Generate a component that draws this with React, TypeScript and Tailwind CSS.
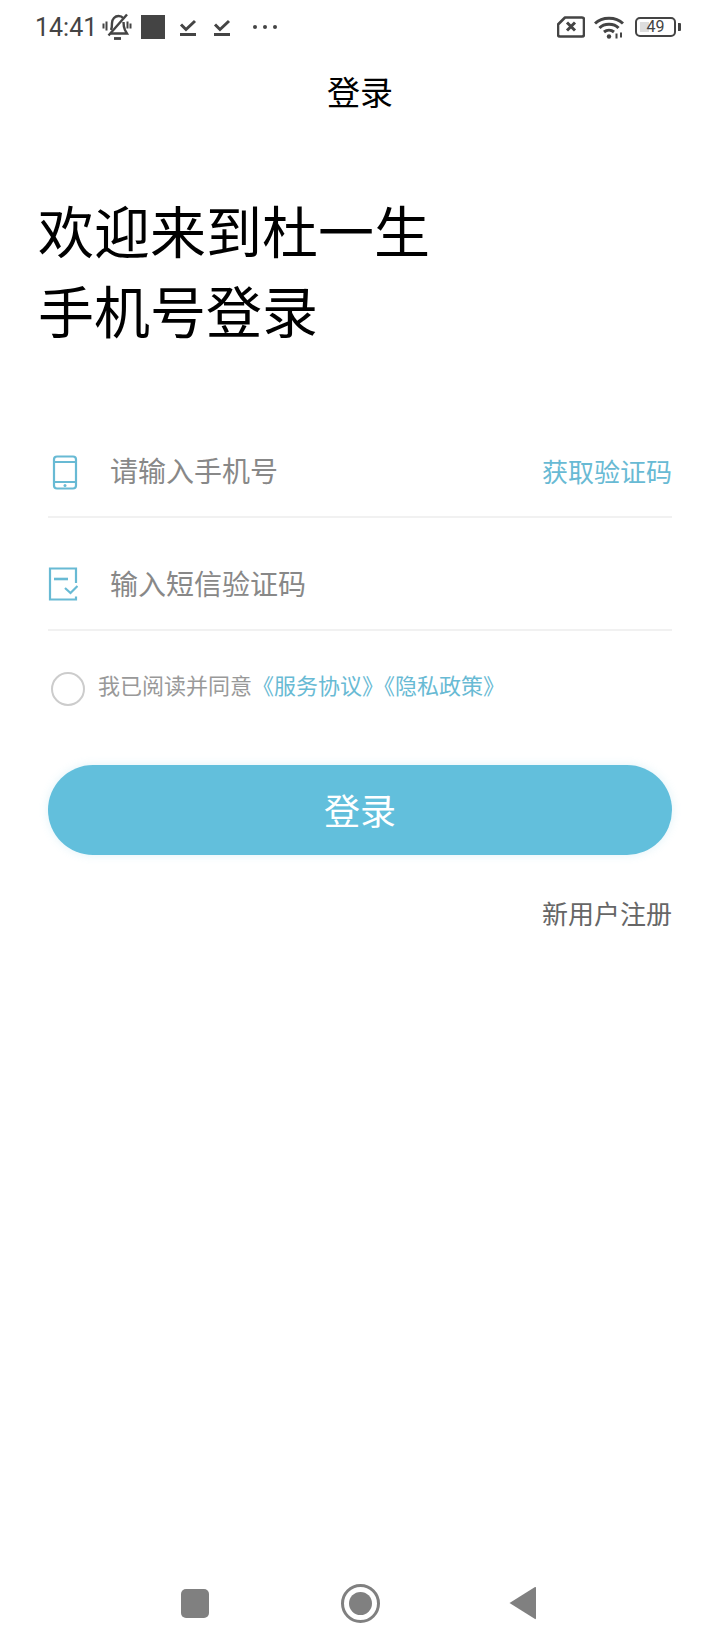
import React from "react";

const font = { fontFamily: '"Noto Sans CJK SC", "Noto Sans", sans-serif' };

function Tick({ className }: { className: string }) {
  return (
    <svg width="18" height="20" viewBox="0 0 18 20" className={className} fill="none" stroke="#444">
      <path d="M2 7.500l5 5 9-8.500" strokeWidth="3" />
      <path d="M1 17.500h16" strokeWidth="3" />
    </svg>
  );
}

function StatusBar() {
  return (
    <div className="flex h-[54px] items-center justify-between pl-[35px] pr-[39px] text-[#444]">
      <div className="flex items-center">
        <span className="text-[25px] leading-none [font-family:Roboto,sans-serif]">14:41</span>
        <svg width="30" height="28" viewBox="0 0 30 28" className="ml-[5px]" fill="none" stroke="#444" strokeWidth="2.400">
          <path d="M9 17c1-2 1-4 1-7 0-4 3-7 6.500-7 2 0 3.500.5 4.500 2M21.500 9c0 4 .5 6 1.500 8l2 3.500H8.500" />
          <path d="M6.500 22.500 25 1.500" />
          <path d="M12 25.500h7" strokeWidth="2.800" />
          <path d="M1.500 10.500v5M4.500 8.500v9M25.500 8.500v7M28.500 10.500v5" strokeWidth="2" />
        </svg>
        <div className="ml-[9px] h-[24px] w-[24px] bg-[#444]" />
        <Tick className="ml-[14px]" />
        <Tick className="ml-[16px]" />
        <div className="ml-[22px] flex gap-[6px]">
          <span className="h-[4px] w-[4px] rounded-full bg-[#444]" />
          <span className="h-[4px] w-[4px] rounded-full bg-[#444]" />
          <span className="h-[4px] w-[4px] rounded-full bg-[#444]" />
        </div>
      </div>
      <div className="flex items-center">
        <svg width="28" height="22" viewBox="0 0 28 22" fill="none" stroke="#444">
          <path d="M8 1.500h17a2 2 0 0 1 2 2v15a2 2 0 0 1-2 2H3a2 2 0 0 1-2-2V8.500z" strokeWidth="2.600" strokeLinejoin="round" />
          <path d="M10 6.500l8 8M18 6.500l-8 8" strokeWidth="3" />
        </svg>
        <svg width="30" height="24" viewBox="0 0 30 24" className="ml-[9px]" fill="none" stroke="#444" strokeWidth="3">
          <path d="M1 8.500C8 1.500 22 1.500 29 8.500" />
          <path d="M5.500 13C10 8 20 8 24.500 13" />
          <path d="M10 17c3-2.500 7-2.500 10 0" />
          <circle cx="15" cy="21.500" r="2.200" fill="#444" stroke="none" />
          <path d="M22.500 18.500v5M27 17.500v5" strokeWidth="2" />
        </svg>
        <div className="relative ml-[11px] flex h-[20px] w-[41px] items-center justify-center rounded-[5px] border-2 border-[#444]">
          <div className="absolute left-[3px] top-[3px] h-[10px] w-[9px] bg-[#ddd]" />
          <span className="relative text-[16px] leading-none text-[#444] [font-family:Roboto,sans-serif]">49</span>
        </div>
        <div className="ml-[2px] h-[8px] w-[3px] rounded-r-[1px] bg-[#444]" />
      </div>
    </div>
  );
}

function Field({
  icon,
  placeholder,
  action,
}: {
  icon: React.ReactNode;
  placeholder: string;
  action?: string;
}) {
  return (
    <div className="flex h-[113px] items-center border-b-2 border-[#f1f1f1] pt-[20px]">
      <div className="flex w-[62px] justify-start">{icon}</div>
      <span className="flex-1 pb-[2px] text-[28px] leading-[40px] text-[#888]">{placeholder}</span>
      {action && <span className="text-[26px] leading-[40px] text-[#68bad4]">{action}</span>}
    </div>
  );
}

export default function App() {
  return (
    <div className="flex h-[1650px] w-[720px] flex-col bg-white" style={font}>
      <StatusBar />
      <div className="flex h-[76px] items-center justify-center pb-[2px] text-[33px] leading-none text-black">登录</div>

      <div className="mt-[59px] pl-[38px] text-[56px] leading-[80px] text-black">
        <div>欢迎来到杜一生</div>
        <div>手机号登录</div>
      </div>

      <div className="mt-[56px] px-[48px]">
        <Field
          placeholder="请输入手机号"
          action="获取验证码"
          icon={
            <svg width="26" height="36" viewBox="0 0 26 36" fill="none" stroke="#68bad4" strokeWidth="2.200" className="ml-[4px] mt-[4px]">
              <rect x="2" y="1.500" width="22" height="32" rx="3" />
              <path d="M2 7h22M2 27h22" />
              <circle cx="13" cy="30.500" r="1.500" fill="#68bad4" stroke="none" />
            </svg>
          }
        />
        <Field
          placeholder="输入短信验证码"
          icon={
            <svg width="30" height="34" viewBox="0 0 30 34" fill="none" stroke="#68bad4" strokeWidth="2.200" className="mt-[1px]">
              <path d="M28 16V1.500H2v31h26v-3" />
              <path d="M6 12h14" strokeWidth="2.600" />
              <path d="M17 21l5.500 5 7-7" />
            </svg>
          }
        />

        <div className="mt-[41px] flex items-start pl-[3px]">
          <div className="h-[34px] w-[34px] rounded-full border-2 border-[#ccc]" />
          <span className="ml-[13px] -mt-[4px] text-[22px] leading-[32px] text-[#999]">我已阅读并同意</span>
          <span className="-mt-[4px] text-[22px] leading-[32px] text-[#68bad4]">《服务协议》《隐私政策》</span>
        </div>

        <div className="mt-[59px] flex h-[90px] items-center justify-center rounded-[45px] bg-[#62bfdc] pb-[2px] text-[36px] text-white shadow-[0_0_10px_rgba(98,191,220,0.2)]">
          登录
        </div>

        <div className="mt-[39px] text-right text-[26px] leading-[38px] text-[#666]">新用户注册</div>
      </div>

      <div className="mt-auto flex h-[84px] items-start pl-[181px] pt-[18px]">
        <div className="mt-[5px] h-[29px] w-[28px] rounded-[5px] bg-[#808080]" />
        <div className="ml-[132px] flex h-[39px] w-[39px] items-center justify-center rounded-full border-[3px] border-[#808080]">
          <div className="h-[23px] w-[23px] rounded-full bg-[#808080]" />
        </div>
        <svg width="28" height="34" viewBox="0 0 28 34" className="ml-[129px] mt-[2px]">
          <path d="M26 1 .5 17 26 33Q27 33.500 27 32V2Q27 .5 26 1Z" fill="#808080" />
        </svg>
      </div>
    </div>
  );
}
